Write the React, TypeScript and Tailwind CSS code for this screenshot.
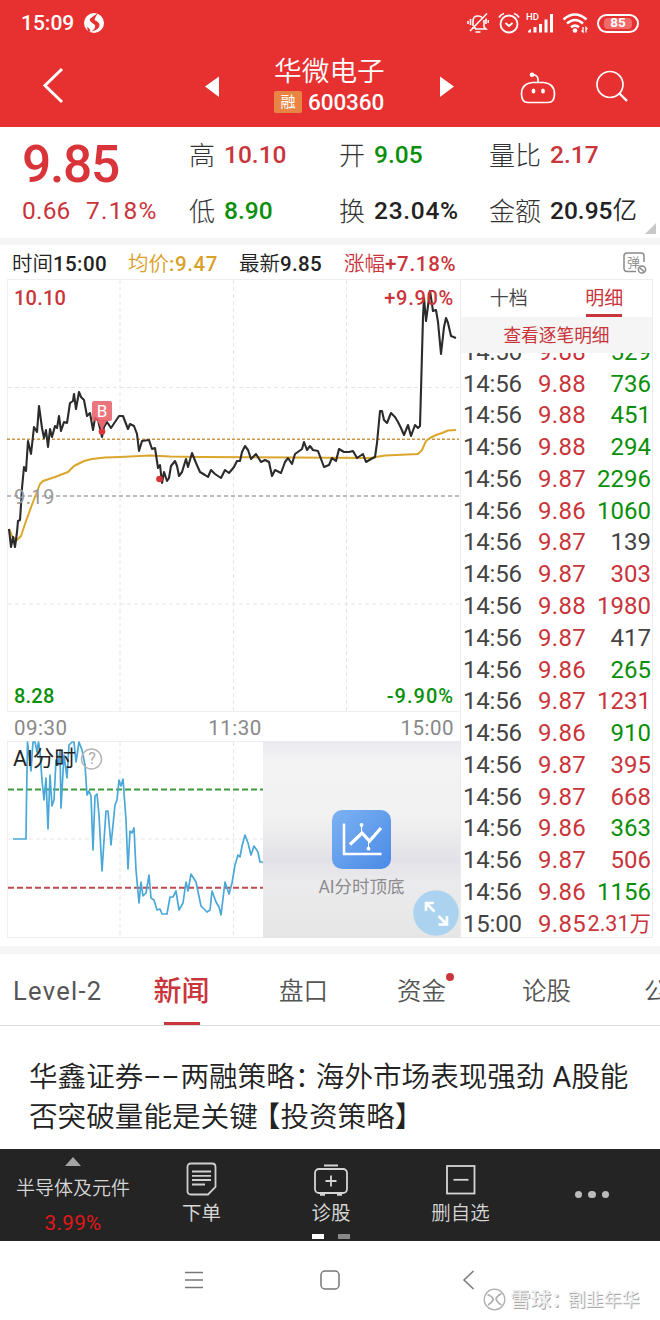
import React from "react"

interface Trade {
  time: string
  price: string
  volume: string
  side: "buy" | "sell" | "none"
}

const trades: Trade[] = [
  { time: "14:56", price: "9.88", volume: "529", side: "sell" },
  { time: "14:56", price: "9.88", volume: "736", side: "sell" },
  { time: "14:56", price: "9.88", volume: "451", side: "sell" },
  { time: "14:56", price: "9.88", volume: "294", side: "sell" },
  { time: "14:56", price: "9.87", volume: "2296", side: "sell" },
  { time: "14:56", price: "9.86", volume: "1060", side: "sell" },
  { time: "14:56", price: "9.87", volume: "139", side: "none" },
  { time: "14:56", price: "9.87", volume: "303", side: "buy" },
  { time: "14:56", price: "9.88", volume: "1980", side: "buy" },
  { time: "14:56", price: "9.87", volume: "417", side: "none" },
  { time: "14:56", price: "9.86", volume: "265", side: "sell" },
  { time: "14:56", price: "9.87", volume: "1231", side: "buy" },
  { time: "14:56", price: "9.86", volume: "910", side: "sell" },
  { time: "14:56", price: "9.87", volume: "395", side: "buy" },
  { time: "14:56", price: "9.87", volume: "668", side: "buy" },
  { time: "14:56", price: "9.86", volume: "363", side: "sell" },
  { time: "14:56", price: "9.87", volume: "506", side: "buy" },
  { time: "14:56", price: "9.86", volume: "1156", side: "sell" },
  { time: "15:00", price: "9.85", volume: "2.31万", side: "buy" },
]

const sideColor = {
  buy: "text-[#c9353b]",
  sell: "text-[#0a8f0a]",
  none: "text-[#444]",
}

const pricePoints =
  "9,529 11,547 13,537 15,547 17,532 18,521 20,520 21,505 22,488 24,467 26,471 28,441 31,454 34,427 37,432 39,406 42,428 44,438 46,430 48,447 50,429 52,437 55,426 57,428 59,416 61,431 64,422 67,423 70,403 73,401 74,394 76,409 79,392 81,397 84,400 87,416 90,413 93,430 95,418 98,420 102,437 104,427 107,422 111,428 115,422 119,416 123,416 128,429 130,424 134,426 137,434 139,451 142,441 149,440 152,449 155,448 158,468 160,465 162,483 164,472 167,481 169,478 171,466 175,461 177,466 179,476 182,472 186,459 188,467 192,453 196,463 200,472 205,475 208,477 211,470 215,474 221,478 225,470 229,473 234,467 237,461 240,461 242,452 245,446 248,450 251,459 256,454 261,462 265,460 269,462 272,476 275,470 281,473 285,462 288,458 292,464 295,454 302,449 304,442 307,450 310,446 313,450 318,451 324,467 329,465 332,458 336,461 339,449 344,452 349,452 353,451 357,458 363,454 366,462 371,459 375,457 377,443 380,411 382,411 384,420 387,423 391,413 395,417 398,422 401,428 404,435 408,425 411,436 415,425 418,428 420,426 421,390 423,317 424,298 426,321 430,291 433,311 436,310 438,322 441,354 444,327 446,318 448,323 451,336 456,338"

const averagePoints =
  "9,529 12,536 17,540 21,536 26,521 33,502 40,484 43,481 49,479 55,477 68,472 74,466 84,461 92,459 105,457.5 120,457 150,455.5 170,456.5 200,457 370,458 385,455.5 418,454 422,450 426,441 430,438 436,435 442,433 448,430.5 456,430"

const aiPoints =
  "13,839 26,839 26.5,800 27.5,742 31,771 33,742 35,742 37,752 38.5,742 40,752 42,780 44,800 46,778 48,829 50,775 52,806 54,800 56,760 58,765 60,750 61,808 64,755 67,778 69,745 72,742 74,742 76,762 79,742 82,750 85,765 87,795 89,791 91,796 93,850 95,796 97,794 99,815 102,871 106,811 108,811 111,845 115,805 117,800 119,780 121,786 123,779 126,820 128,869 130,831 132,833 134,828 136,870 139,903 141,882 143,896 146,893 149,875 151,898 154,900 157,910 160,909 162,914 167,914 170,897 173,897 176,891 179,910 183,903 186,882 188,891 191,874 196,882 201,906 207,912 210,910 212,891 216,902 219,907 221,915 225,882 229,894 232,883 235,865 238,855 240,857 242,846 245,835 248,843 251,855 254,846 258,852 260,862 263,862"

function StatusBar() {
  return (
    <div className="flex h-[46px] items-center pl-[21px] pr-[21px] text-white">
      <span className="w-[62px] font-medium text-[21px] leading-none">15:09</span>
      <svg width="22" height="22" viewBox="0 0 22 22">
        <circle cx="11" cy="11" r="10" fill="white" />
        <path d="M15.500 0.500 L7 6.800 Q6 8.500 8.500 10.500 L12 13 Q13 16 8.500 19.500 Q17 17.500 16.500 12 Q15 9.500 11.500 8 Q12 5 15.500 0.500Z" fill="#e73030" />
        <path d="M4 15 Q7 16 7.500 20 L5 19Z" fill="#e73030" />
      </svg>
      <div className="ml-auto flex items-center">
        <svg width="22" height="22" viewBox="0 0 22 22" fill="none" stroke="white" strokeWidth="1.600">
          <path d="M5 16 H9 M6 14 V9 Q6 4 11 4 Q14 4 15 5.500 M17 8 V15 L19 17 H8" />
          <path d="M20 1.500 L3 19 M8.500 20 H13.500 M3.500 7 V13 M1 9 V12 M19 6.500 V12 M21.300 8 V11" />
        </svg>
        <svg className="ml-[9px]" width="22" height="22" viewBox="0 0 22 22" fill="none" stroke="white" strokeWidth="1.800">
          <circle cx="11" cy="12" r="8.500" />
          <path d="M1 5.500 Q2.500 2.500 6 1.500 M21 5.500 Q19.500 2.500 16 1.500 M7.500 11 L11 14 L14.500 11" />
        </svg>
        <div className="relative ml-[7px] h-[22px] w-[27px]">
          <span className="absolute top-0 -left-px text-[9.500px] leading-none font-medium">HD</span>
          <svg width="27" height="22" viewBox="0 0 27 22" fill="white">
            <path d="M1 20.500 Q1 17.500 4 17 V20.500Z" />
            <rect x="6.500" y="15" width="3" height="5.500" />
            <rect x="12" y="12" width="3" height="8.500" />
            <rect x="17.500" y="7.500" width="3" height="13" />
            <rect x="23" y="2" width="3" height="18.500" />
          </svg>
        </div>
        <svg className="ml-[8px]" width="27" height="22" viewBox="0 0 27 22" fill="none" stroke="white" strokeWidth="2.600">
          <path d="M1.500 7.500 Q13 -2.500 24.500 7.500 M5 11.500 Q13 4.500 21 11.500 M9 15.300 Q13 12 17 15.300" />
          <circle cx="13" cy="18.500" r="2.300" fill="white" stroke="none" />
          <path d="M21 15 V20 L19.500 18.500 M24 20.500 V15.500 L25.500 17" strokeWidth="1.300" />
        </svg>
        <div className="ml-[8px] flex h-[19px] w-[42px] items-center justify-center rounded-full border-2 border-white p-[2px]">
          <div className="flex h-full w-[28px] items-center justify-center rounded-sm bg-[#f26a6a] text-[13.500px] font-bold leading-none">85</div>
        </div>
      </div>
    </div>
  )
}

function TitleBar() {
  return (
    <div className="flex h-[81px] text-white">
      <svg className="mt-[20px] ml-[42px]" width="24" height="38" viewBox="0 0 24 38" fill="none" stroke="white" strokeWidth="3">
        <path d="M20 3 L3 19.500 L20 36" />
      </svg>
      <svg className="mt-[30px] ml-[138px]" width="17" height="22" viewBox="0 0 17 22" fill="white">
        <path d="M1 10.500 L15 0.500 V21Z" />
      </svg>
      <div className="ml-[53px] flex w-[112px] flex-col">
        <div className="mt-[9px] h-[33px] text-[27.700px] leading-[33px] font-[350] whitespace-nowrap">华微电子</div>
        <div className="mt-[2px] flex h-[24px] items-center">
          <span className="flex h-[22px] w-[28px] items-center justify-center rounded-[2px] bg-[#e98544] text-[15px] leading-none">融</span>
          <span className="ml-[6px] text-[22.500px] leading-none font-medium tracking-[-0.100px]">600360</span>
        </div>
      </div>
      <svg className="mt-[30px] ml-[53px]" width="17" height="22" viewBox="0 0 17 22" fill="white">
        <path d="M15 10.500 L1 0.500 V21Z" />
      </svg>
      <svg className="mt-[25px] ml-[64px]" width="38" height="34" viewBox="0 0 38 34" fill="none" stroke="white" strokeWidth="1.700">
        <path d="M12.500 11.500 H23.500 Q34.500 12.500 34.500 23 Q34.500 31.500 28 31.500 H8 Q1.500 31.500 1.500 23 Q1.500 12.500 12.500 11.500Z" />
        <path d="M18 11.500 V8.500 Q18 4 12 3.500" />
        <circle cx="12" cy="3.700" r="2.300" fill="white" stroke="none" />
        <ellipse cx="13.500" cy="20" rx="1.900" ry="2.600" fill="white" stroke="none" />
        <ellipse cx="23" cy="20" rx="1.900" ry="2.600" fill="white" stroke="none" />
      </svg>
      <svg className="mt-[24px] ml-[38px]" width="34" height="34" viewBox="0 0 34 34" fill="none" stroke="white" strokeWidth="1.700">
        <circle cx="14" cy="14.500" r="13" />
        <path d="M23 23 L31 31" strokeWidth="2.400" />
      </svg>
    </div>
  )
}

function Stat({ label, value, unit, color }: { label: string; value: string; unit?: string; color: string }) {
  return (
    <div className="flex items-center whitespace-nowrap">
      <span className="font-light text-[26px] leading-none text-[#333]">{label}</span>
      <span className={`ml-[9px] text-[24.500px] leading-none font-medium ${value.includes("%") ? "tracking-[0.700px]" : ""} ${color}`}>
        {value}
        {unit && <span className="font-[350]">{unit}</span>}
      </span>
    </div>
  )
}

function QuotePanel() {
  return (
    <div className="relative flex h-[111px] bg-white pl-[22px]">
      <div className="w-[167px] font-medium text-[#d9343a]">
        <div className="mt-[11px] h-[54px] text-[51.500px] leading-[54px] tracking-[-1.300px]">9.85</div>
        <div className="mt-[4px] flex h-[30px] items-center text-[24.500px] leading-none font-normal whitespace-nowrap text-[#c9353b]">
          <span className="w-[64px] tracking-[0.200px]">0.66</span>
          <span className="tracking-[1.200px]">7.18%</span>
        </div>
      </div>
      <div className="grid h-[112px] grid-cols-[150px_150px_160px] grid-rows-[57px_55px]">
        <Stat label="高" value="10.10" color="text-[#c9353b]" />
        <Stat label="开" value="9.05" color="text-[#0a8f0a]" />
        <Stat label="量比" value="2.17" color="text-[#c9353b]" />
        <Stat label="低" value="8.90" color="text-[#0a8f0a]" />
        <Stat label="换" value="23.04%" color="text-[#222]" />
        <Stat label="金额" value="20.95" unit="亿" color="text-[#222]" />
      </div>
      <svg className="absolute right-[4px] bottom-[4px]" width="11" height="11" viewBox="0 0 11 11">
        <path d="M11 0 V11 H0Z" fill="#c8c8c8" />
      </svg>
    </div>
  )
}

function PriceChart() {
  return (
    <div className="relative h-[433px] w-[460px] font-medium text-[20px] leading-[24px]">
      <svg className="block" width="460" height="433" viewBox="0 279 460 433" fill="none">
        <path d="M7.500 279.500 H459.500 M7.500 279 V712 M7.500 711.500 H459.500" stroke="#efefef" />
        <path d="M120 280 V711 M233.500 280 V711 M346.500 280 V711 M8 387.500 H459 M8 604 H459" stroke="#e6e6e6" strokeDasharray="4 3" />
        <path d="M7 496 H459" stroke="#a5a5a5" strokeWidth="1.300" strokeDasharray="4 3" />
        <path d="M7 439.300 H459" stroke="#cf9440" strokeWidth="1.500" strokeDasharray="3 2" />
        <polyline points={averagePoints} stroke="#dba62c" strokeWidth="2" strokeLinejoin="round" />
        <polyline points={pricePoints} stroke="#2b2b2b" strokeWidth="2.100" strokeLinejoin="round" />
        <circle cx="102" cy="431.500" r="3.300" fill="#d9343a" />
        <circle cx="159.500" cy="479" r="3.300" fill="#d9343a" />
        <path d="M97 420 H107 L102 430Z" fill="#ea6670" />
      </svg>
      <span className="absolute top-[122px] left-[92px] flex h-[20px] w-[20px] items-center justify-center rounded-[2px] bg-[#e85d66]/85 text-[17px] font-normal text-white">B</span>
      <span className="absolute top-[7px] left-[14px] tracking-[0.200px] text-[#c9353b]">10.10</span>
      <span className="absolute top-[7px] right-[6px] tracking-[0.700px] text-[#c9353b]">+9.90%</span>
      <span className="absolute top-[206px] left-[14px] font-normal tracking-[0.500px] text-[#999]">9.19</span>
      <span className="absolute top-[405px] left-[14px] tracking-[0.200px] text-[#0a8f0a]">8.28</span>
      <span className="absolute top-[405px] right-[6px] tracking-[1px] text-[#0a8f0a]">-9.90%</span>
    </div>
  )
}

function AiChart() {
  return (
    <div className="relative flex h-[197px] w-[460px]">
      <svg className="block" width="263" height="197" viewBox="0 741 263 197" fill="none">
        <path d="M7.500 741 V938 M7.500 741.500 H263 M7.500 937.500 H263" stroke="#efefef" />
        <path d="M120 742 V937 M233.500 742 V937 M8 839 H263" stroke="#e6e6e6" strokeDasharray="4 3" />
        <path d="M8 789.500 H263" stroke="#3c9a3c" strokeWidth="2" strokeDasharray="6 3" />
        <path d="M8 887.700 H263" stroke="#c04a4e" strokeWidth="2" strokeDasharray="6 3" />
        <polyline points={aiPoints} stroke="#4aa8d8" strokeWidth="1.700" strokeLinejoin="round" />
        <circle cx="91.500" cy="759" r="10" stroke="#b5b5b5" strokeWidth="1.500" />
      </svg>
      <span className="absolute top-[6px] left-[13px] text-[21.500px] leading-[24px] text-[#222]">AI分时</span>
      <span className="absolute top-[9px] left-[82px] w-[20px] text-center text-[16px] leading-[18px] text-[#aaa]">?</span>
      <div className="flex h-[197px] w-[197px] flex-col items-center bg-[linear-gradient(180deg,#e9e9f0_0%,#f3f3f3_10%,#f2f2f2_38%,#e8e8ea_52%,#e1e1e8_60%,#ebebed_72%,#e6e6e6_100%)]">
        <svg className="mt-[69px]" width="59" height="59" viewBox="0 0 59 59" fill="none">
          <defs>
            <linearGradient id="aiTile" x1="0" y1="0" x2="1" y2="1">
              <stop offset="0" stopColor="#7db2f3" />
              <stop offset="1" stopColor="#4a8ae6" />
            </linearGradient>
          </defs>
          <rect width="59" height="59" rx="10" fill="url(#aiTile)" />
          <path d="M12 13.500 V44 H49.500" stroke="white" strokeWidth="2.600" />
          <path d="M18 34.500 L30 23 L37.500 31 L49 18" stroke="white" strokeWidth="3.200" />
          <path d="M29.500 15 V24 M36.500 30 V38" stroke="white" strokeWidth="1" />
          <circle cx="29.500" cy="15" r="1.900" fill="white" />
          <circle cx="36.500" cy="38.700" r="1.900" fill="white" />
        </svg>
        <span className="mt-[6px] text-[17.500px] leading-[24px] text-[#8c8c8c]">AI分时顶底</span>
      </div>
      <svg className="absolute top-[149px] left-[413px]" width="46" height="46" viewBox="0 0 46 46" fill="none" stroke="white" strokeWidth="2.600">
        <circle cx="23" cy="23" r="22.800" fill="#abd3ef" stroke="none" />
        <path d="M13 21 V13 H21 M13.500 13.500 L21.500 21.500 M34 26 V34.500 H25.500 M33.500 34 L25.500 26" />
      </svg>
    </div>
  )
}

function TradeList() {
  return (
    <div className="flex h-[659px] w-[193px] flex-col border border-[#ececec] bg-white">
      <div className="flex h-[37px] text-[19px] leading-[37px]">
        <div className="w-1/2 text-center font-[350] text-[#444]">十档</div>
        <div className="flex w-1/2 flex-col items-center text-[#c9353b]">
          <span className="h-[34px] leading-[37px]">明细</span>
          <span className="h-[3px] w-[36px] bg-[#c9353b]" />
        </div>
      </div>
      <div className="h-[36px] bg-[#f5f5f5] text-center text-[17.700px] leading-[39px] text-[#c9353b]">查看逐笔明细</div>
      <div className="h-[584px] overflow-hidden">
        <div className="-mt-[17px]">
          {trades.map((trade, i) => (
            <div key={i} className="flex h-[31.780px] items-center pr-px pl-[2px] text-[24px] leading-none whitespace-nowrap">
              <span className="w-[75px] shrink-0 text-[#444] tracking-[-0.200px]">{trade.time}</span>
              <span className="w-[47px] shrink-0 text-[#c9353b] tracking-[0.300px]">{trade.price}</span>
              <span className={`flex-1 text-right ${trade.volume.includes("万") ? "text-[21.500px]" : ""} ${sideColor[trade.side]}`}>
                {trade.volume}
              </span>
            </div>
          ))}
        </div>
      </div>
    </div>
  )
}

function SectionTabs() {
  return (
    <div className="flex h-[72px] overflow-hidden border-b border-[#dcdcdc] text-[24.500px] leading-[75px] font-[350] whitespace-nowrap text-[#555]">
      <span className="ml-[13px] w-[140px] shrink-0 text-[25.500px] leading-[74px] font-normal tracking-[1.300px]">Level-2</span>
      <div className="flex w-[57px] shrink-0 flex-col items-center font-medium text-[#c9353b]">
        <span className="h-[68px] text-[28px]">新闻</span>
        <span className="h-[4px] w-[36px] bg-[#c9353b]" />
      </div>
      <span className="ml-[69px] w-[118px] shrink-0">盘口</span>
      <div className="relative w-[125px] shrink-0">
        资金
        <span className="absolute top-[19px] left-[49px] h-[8px] w-[8px] rounded-full bg-[#c9353b]" />
      </div>
      <span className="w-[122px] shrink-0">论股</span>
      <span className="shrink-0">公告</span>
    </div>
  )
}

function Toolbar() {
  return (
    <div className="flex h-[92px] bg-[#242424] text-[19px] leading-[24px] text-[#d5d5d5]">
      <div className="flex w-[146px] flex-col items-center">
        <svg className="mt-[8px]" width="16" height="9" viewBox="0 0 16 9">
          <path d="M8 0 L16 9 H0Z" fill="#a5a5a5" />
        </svg>
        <span className="mt-[11px] font-[350]">半导体及元件</span>
        <span className="mt-[10px] text-[20.500px] tracking-[0.400px] text-[#e01818]">3.99%</span>
      </div>
      <div className="flex w-[111px] flex-col items-center">
        <svg className="mt-[13px]" width="31" height="34" viewBox="0 0 31 34" fill="none" stroke="#cfcfcf" strokeWidth="1.800">
          <path d="M5 1.500 H26 Q29.500 1.500 29.500 5 V25 L22 32.500 H5 Q1.500 32.500 1.500 29 V5 Q1.500 1.500 5 1.500Z" />
          <path d="M6 9.500 H25 M6 13.800 H25 M6 18 H25 M6 22.500 H19" />
        </svg>
        <span className="mt-[6px] text-[19.500px]">下单</span>
      </div>
      <div className="flex w-[148px] flex-col items-center">
        <svg className="mt-[15px]" width="34" height="32" viewBox="0 0 34 32" fill="none" stroke="#d5d5d5" strokeWidth="1.800">
          <rect x="1" y="5" width="32" height="24" rx="4" />
          <path d="M10 1.500 H24 M17 11.500 V22.500 M11.500 17 H22.500" />
          <path d="M6 30.500 H11 M23 30.500 H28" strokeWidth="2.500" />
        </svg>
        <span className="mt-[6px] text-[19.500px]">诊股</span>
        <div className="mt-[8px] flex gap-[14px]">
          <span className="h-[5px] w-[12px] bg-white" />
          <span className="h-[5px] w-[12px] bg-[#888]" />
        </div>
      </div>
      <div className="flex w-[111px] flex-col items-center">
        <svg className="mt-[16px]" width="30" height="30" viewBox="0 0 30 30" fill="none" stroke="#d5d5d5" strokeWidth="1.800">
          <rect x="1" y="1" width="27.500" height="27.500" />
          <path d="M7.500 14.800 H22.500" />
        </svg>
        <span className="mt-[7px] text-[19.500px] font-[350]">删自选</span>
      </div>
      <div className="flex flex-1 items-center justify-center gap-[6px] pb-px pl-[8px]">
        <span className="h-[7.500px] w-[7.500px] rounded-full bg-[#bbb]" />
        <span className="h-[7.500px] w-[7.500px] rounded-full bg-[#bbb]" />
        <span className="h-[7.500px] w-[7.500px] rounded-full bg-[#bbb]" />
      </div>
    </div>
  )
}

function SystemNav() {
  return (
    <div className="relative h-[79px] bg-white">
      <div className="flex items-start pt-[29px] pl-[184px]">
        <svg width="20" height="20" viewBox="0 0 20 20" stroke="#777" strokeWidth="1.500">
          <path d="M1 2.500 H19 M1 10 H19 M1 17.500 H19" />
        </svg>
        <svg className="ml-[116px]" width="20" height="20" viewBox="0 0 20 20" fill="none" stroke="#777" strokeWidth="1.500">
          <rect x="1" y="1" width="18" height="18" rx="4" />
        </svg>
        <svg className="ml-[122px]" width="13" height="20" viewBox="0 0 13 20" fill="none" stroke="#777" strokeWidth="1.500">
          <path d="M11.500 1 L2 10 L11.500 19" />
        </svg>
      </div>
      <div className="absolute top-[47px] left-[483px] flex h-[24px] items-center whitespace-nowrap text-[#f0f0f0] [text-shadow:1px_1px_0_#a8a8a8]">
        <svg width="24" height="24" viewBox="0 0 24 24" fill="none" stroke="#b0b0b0" strokeWidth="1.300">
          <circle cx="11.500" cy="11.500" r="10.300" />
          <path d="M4.500 6.500 Q9 8 10.500 11.500 Q8.500 15 5 17 M18.500 5.500 Q14 8 13 11 Q14.500 15 18.500 17" strokeWidth="1.700" />
        </svg>
        <span className="ml-[3px] text-[20.500px] leading-[24px] font-medium">雪球：</span>
        <span className="-ml-[4px] text-[18px] leading-[24px]">割韭年华</span>
      </div>
    </div>
  )
}

export default function App() {
  return (
    <div className="flex h-[1320px] w-[660px] flex-col overflow-hidden bg-white font-[Roboto,'Noto_Sans_CJK_SC',sans-serif]">
      <header className="h-[127px] shrink-0 bg-[#e73030]">
        <StatusBar />
        <TitleBar />
      </header>
      <QuotePanel />
      <div className="h-[7px] bg-[#f5f5f5]" />
      <div className="flex h-[34px] items-center pt-[4px] pl-[12px] text-[20.500px] leading-none font-[350] whitespace-nowrap text-[#222]">
        <span className="w-[116px]">时间<b className="font-medium tracking-[0.400px]">15:00</b></span>
        <span className="w-[111px] text-[#d9a02a]">均价<b className="font-medium tracking-[0.600px]">:9.47</b></span>
        <span className="w-[105px]">最新<b className="font-medium tracking-[0.300px]">9.85</b></span>
        <span className="text-[#c9353b]">涨幅<b className="font-medium tracking-[0.700px]">+7.18%</b></span>
        <div className="relative mt-[-3px] mr-[13px] ml-auto flex h-[22px] w-[24px]">
          <svg width="24" height="22" viewBox="0 0 24 22" fill="none" stroke="#8a8a8a" strokeWidth="1.500">
            <path d="M21 10 V4 Q21 1 18 1 H4 Q1 1 1 4 V16 Q1 19.500 4 19.500 H13" />
            <circle cx="19" cy="17.500" r="3.600" />
            <path d="M16.500 15.500 L21.500 20" />
          </svg>
          <span className="absolute top-[4px] left-[4px] text-[13px] leading-none text-[#8a8a8a]">弹</span>
        </div>
      </div>
      <div className="flex h-[667px]">
        <div className="flex w-[460px] flex-col">
          <PriceChart />
          <div className="flex h-[29px] items-center justify-between pt-[3px] pr-[6px] pl-[14px] text-[20.500px] leading-none tracking-[0.500px] text-[#888]">
            <span>09:30</span>
            <span className="pl-[2px]">11:30</span>
            <span>15:00</span>
          </div>
          <AiChart />
        </div>
        <TradeList />
      </div>
      <div className="h-[8px] bg-[#f5f5f5]" />
      <SectionTabs />
      <div className="flex h-[123px] flex-col pt-[32px] pl-[29px] text-[28.600px] leading-[39.500px] font-[350] whitespace-nowrap text-[#222]">
        <div className="flex">
          <span>华鑫证券</span>
          <span className="-mt-[5px] w-[37px] origin-left scale-x-[1.85] font-['Noto_Sans_CJK_SC'] font-normal">--</span>
          <span>两融策略</span>
          <span className="w-[21px]">：</span>
          <span>海外市场表现强劲</span>
          <span className="ml-[8px]"><span className="font-normal">A</span>股能</span>
        </div>
        <div className="flex">
          <span>否突破量能是关键</span>
          <span className="-ml-[6px]">【</span>
          <span>投资策略】</span>
        </div>
      </div>
      <Toolbar />
      <SystemNav />
    </div>
  )
}
